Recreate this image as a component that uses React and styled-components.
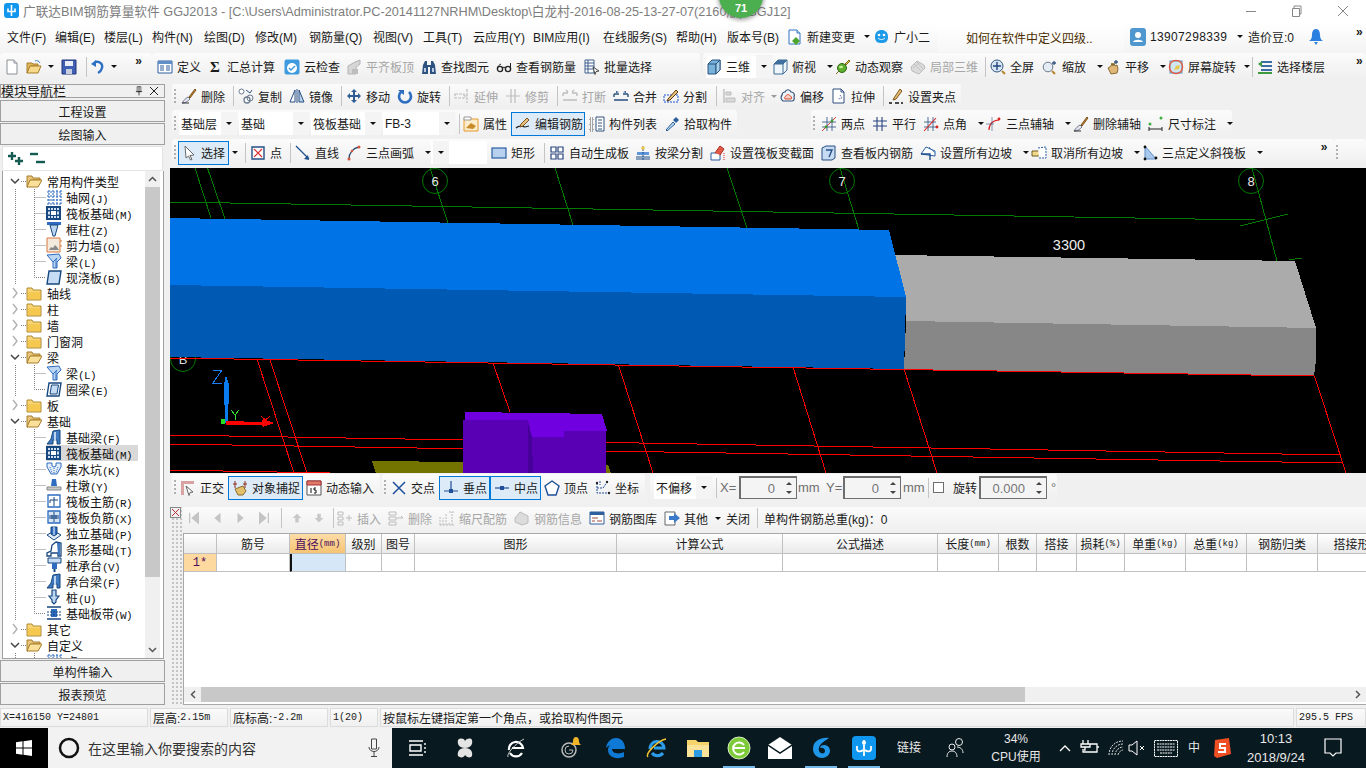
import React from "react";
import styled, { createGlobalStyle } from "styled-components";

const GlobalStyle = createGlobalStyle`
  html, body { margin: 0; padding: 0; background: #f0f0f0; }
  body { font-family: "Liberation Sans", "Noto Sans CJK SC", sans-serif; font-size: 12px; color: #1a1a1a; }
`;

/* ---------- icons ---------- */
const I = {
  newdoc: <><path d="M3 1h7l3 3v11H3z" fill="#fff" stroke="#8a8f96" /><path d="M10 1v3h3" fill="#dfe6ee" stroke="#8a8f96" /></>,
  change: <><path d="M2 1h8l3 3v11H2z" fill="#fff" stroke="#2f72c4" /><path d="M10 1v3h3" fill="#dfe6ee" stroke="#2f72c4" /><path d="M9 8l4 4-4 4-4-4z" fill="#4da52e" /></>,
  open: <><path d="M1 4h5l1 1h5v2H5L1 14z" fill="#e0b65a" stroke="#a77d2a" /><path d="M4 7h11l-3 7H1z" fill="#f6d98a" stroke="#a77d2a" /><path d="M9 2c2-1 4 0 5 2" fill="none" stroke="#3c7fc4" /></>,
  save: <><path d="M1 1h14v14H1z" fill="#3f5fb5" stroke="#23387a" /><path d="M4 2h8v5H4z" fill="#e8edf7" /><path d="M5 10h6v5H5z" fill="#c7cede" /></>,
  undo: <><path d="M5 3c5-1 8 2 7 6-.5 2-2 4-4 5" fill="none" stroke="#2f72c4" strokeWidth="2.4" /><path d="M1 5l5-4v7z" fill="#2f72c4" /></>,
  define: <><path d="M1 2h14v12H1z" fill="#fff" stroke="#2f5e9e" /><path d="M1 2h14v3H1z" fill="#5f8fc9" /><path d="M3 7h4M3 9h4M3 11h4M9 7h4M9 9h4M9 11h4" stroke="#2f5e9e" /></>,
  cloud: <><rect x="0.5" y="0.5" width="15" height="15" rx="2" fill="#3e9be0" /><circle cx="8" cy="9" r="5" fill="#fff" /><path d="M5 9l2 2 4-4" fill="none" stroke="#3e9be0" strokeWidth="1.5" /></>,
  level: <><path d="M2 15V7l7-4 5-2v4l-4 3v7z" fill="#d6d6d6" stroke="#b4b4b4" /><path d="M6 10h6v5H6z" fill="#bdbdbd" /></>,
  binoc: <><path d="M2 6l2-4h2v4h4V2h2l2 4 1 9H9V8H7v7H1z" fill="#2f5380" /><path d="M3 9h2v4H3zM11 9h2v4h-2z" fill="#b9cbe2" /></>,
  glasses: <><circle cx="4" cy="10" r="2.6" fill="none" stroke="#222" strokeWidth="1.4" /><circle cx="12" cy="10" r="2.6" fill="none" stroke="#222" strokeWidth="1.4" /><path d="M6 9c1-1 3-1 4 0M1.5 9C2 7 3 6 5 5M14.5 9V4" fill="none" stroke="#222" /></>,
  batch: <><path d="M1 1h9v13H1z" fill="#fff" stroke="#3d5f8c" /><path d="M1 4h9M1 7h9M1 10h9M4 1v13" stroke="#3d5f8c" /><path d="M9 8l6 4-3 .5-1 3z" fill="#fff" stroke="#444" /></>,
  cube: <><path d="M2 5l4-4h8v10l-4 4H2z" fill="#79b3dc" stroke="#28527f" /><path d="M2 5h8v10" fill="none" stroke="#28527f" /><path d="M10 5l4-4v10l-4 4z" fill="#a8d0ea" stroke="#28527f" /></>,
  top: <><path d="M6 1h9v10l-4 4H2V5z" fill="#eef5fb" stroke="#3d6a96" /><path d="M2 5h9v10M11 5l4-4" fill="none" stroke="#3d6a96" /><path d="M6 1h9L11 5H2z" fill="#3f6f9f" /></>,
  orbit: <><circle cx="7" cy="9" r="4.5" fill="#5cae2e" stroke="#2f6b14" /><path d="M1 15l3-3M10 5l4-4 1 1-4 4z" fill="#e8c23a" stroke="#7c6a18" /><ellipse cx="6" cy="8" rx="2" ry="1.3" fill="#c5ec98" /></>,
  local3d: <><path d="M1 8l6-6 7 4 1 3-6 6-7-3z" fill="#dcdcdc" stroke="#bcbcbc" /><path d="M4 5l7 7M7 3l6 7M3 9l6-5" stroke="#c4c4c4" /></>,
  full: <><circle cx="7" cy="7" r="6" fill="#d7e5f5" stroke="#35557f" /><path d="M7 3v8M3 7h8" stroke="#23457c" strokeWidth="1.4" /><path d="M12 12l3 3" stroke="#b5852c" strokeWidth="2" /></>,
  zoom: <><circle cx="6" cy="8" r="4.8" fill="#e4edf6" stroke="#6c7a8b" /><path d="M10 12l3 3" stroke="#b5852c" strokeWidth="2" /><path d="M12 2v4M10 4h4" stroke="#35557f" strokeWidth="1.3" /></>,
  pan: <><path d="M3 9l3-2 1-3 1 3 1-3 1 3 2-1 1 4-1 4-6 1z" fill="#dfb878" stroke="#8b6a32" /><path d="M11 1v4M9 3h4" stroke="#35557f" strokeWidth="1.3" /></>,
  screen: <><rect x="2" y="2" width="12" height="12" fill="#cfe6f0" stroke="#5b8fb0" /><circle cx="8" cy="8" r="6.6" fill="none" stroke="#e5553e" strokeWidth="1.3" /><path d="M6 11l2-4 4-1-1 4z" fill="#e8c84a" /></>,
  floors: <><path d="M4 2h11v2H4zM4 6h11v2H4zM4 10h11v2H4z" fill="#3b6ea5" /><path d="M1 13h14v2H1z" fill="#3d9a3d" /><path d="M1 5l4-3v6z" fill="#3d9a3d" /></>,
  broom: <><path d="M1 15c2-3 4-5 6-6l2 2c-2 2-4 4-8 4z" fill="#e8e8ef" stroke="#6e7690" /><path d="M8 9l6-8 1 1-6 8z" fill="#c98a3a" stroke="#7c5218" /><path d="M1 15h7" stroke="#333" /></>,
  copy: <><circle cx="3.5" cy="3.5" r="2.5" fill="#fff" stroke="#6a7b8f" /><circle cx="9" cy="12" r="3" fill="#fff" stroke="#6a7b8f" strokeWidth="1.3" /><circle cx="12" cy="10" r="3" fill="none" stroke="#6a7b8f" /><path d="M8 2l4 3 2-3" fill="none" stroke="#35557f" /></>,
  mirror: <><path d="M1 14L6 2v12z" fill="#fff" stroke="#274f86" /><path d="M15 14L10 2v12z" fill="#bcd2ea" stroke="#274f86" /><path d="M8 1v14" stroke="#274f86" /></>,
  move: <path d="M8 1l3 3H9v3h3V5l3 3-3 3V9H9v3h2l-3 3-3-3h2V9H4v2L1 8l3-3v2h3V4H5z" fill="#2f5e95" />,
  rotate: <><path d="M4 4a6 6 0 1 0 8 0" fill="none" stroke="#2d6dc0" strokeWidth="2.6" /><path d="M1 2h6v5z" fill="#2d6dc0" /></>,
  extend: <path d="M1 6h9v4H1zM13 1v14M10 8h3" fill="none" stroke="#bdbdbd" strokeWidth="1.2" strokeDasharray="3 1" />,
  trim: <path d="M6 1v14M10 1v14M1 8h14" fill="none" stroke="#bdbdbd" strokeWidth="1.2" />,
  cut: <path d="M1 5h5M10 5h5M1 12h14M1 5v3M15 5v3M4 2l2 2M12 2l-2 2" fill="none" stroke="#bdbdbd" strokeWidth="1.4" />,
  merge: <><path d="M1 12h14M1 6h5M10 6h5M1 6v3M15 6v3" fill="none" stroke="#28507f" strokeWidth="1.4" /><path d="M3 3l3 1-3 1zM13 3l-3 1 3 1z" fill="#28507f" /></>,
  split: <><path d="M1 7h14v7H1z" fill="none" stroke="#1f55d0" strokeDasharray="2 1" /><path d="M5 11l8-9 2 2-8 8-3 1z" fill="#e8c27a" stroke="#5a3a12" /></>,
  alignT: <><path d="M3 1v14" stroke="#bdbdbd" strokeWidth="1.4" /><path d="M5 4h5v3H5zM5 10h9v4H5z" fill="#d8d8d8" stroke="#bdbdbd" /></>,
  offset: <><path d="M3 13a4 4 0 0 1-1-6c0-2 2-3 3-3 1-3 5-3 6 0 3 0 4 3 3 5 1 3-1 4-2 4z" fill="#eef3f9" stroke="#33527c" strokeWidth="1.2" /><path d="M5 11c-1-2 1-3 1-3 1-2 3-2 4 0 2 0 2 3 1 3z" fill="#f8cfc4" stroke="#d8492e" /></>,
  stretch: <><path d="M2 1h8l3 3v11H2z" fill="#fff" stroke="#2f4f7e" /><path d="M10 1v3h3" fill="none" stroke="#2f4f7e" /><path d="M9 7l2 3-4 1" fill="none" stroke="#2f4f7e" strokeDasharray="1 1" /></>,
  grip: <><path d="M6 10l6-9 2 2-6 8-3 1z" fill="#e4c078" stroke="#7c5218" /><path d="M1 15h3M7 15h4M13 15h2" stroke="#111" strokeWidth="1.6" /></>,
  attr: <><path d="M1 3h14v12H1z" fill="#fdecc9" stroke="#e59a2e" /><path d="M1 1h7v3H1z" fill="#fff" stroke="#999" /><path d="M3 12l5-5 5 3-3 3z" fill="#c98a2a" /></>,
  edit: <><path d="M1 12c3-3 6-2 9-1l4-1" fill="none" stroke="#222" strokeWidth="1.2" /><path d="M6 8l6-6 2 2-6 6-3 1z" fill="#e7c27e" stroke="#7c5218" /></>,
  list: <><path d="M1 2h3v3H1zM1 7h3v3H1zM1 12h3v3H1z" fill="none" stroke="#555" strokeDasharray="1 1" /><path d="M7 1h8v14H7z" fill="#fff" stroke="#33527c" /><path d="M9 4h4M9 7h4M9 10h4M9 13h4" stroke="#33527c" /></>,
  pick: <><path d="M2 14l7-8 2 2-8 7z" fill="#bcd6ef" stroke="#2c5f9a" /><path d="M9 4l3-3 3 3-3 3z" fill="#2c5f9a" /></>,
  two: <><path d="M1 15L15 1" stroke="#d23b2e" /><path d="M1 6h14M1 11h14M6 1v14M11 1v14" stroke="#3d5f8c" strokeWidth="0.9" /><circle cx="5" cy="11" r="1.4" fill="#3f9a2e" /><circle cx="11" cy="5" r="1.4" fill="#3f9a2e" /></>,
  para: <path d="M1 5h14M1 10h14M5 1v14M10 1v14" stroke="#29447f" strokeWidth="1.1" />,
  ang: <><path d="M1 6h12M1 11h12M5 1v14M10 1v14" stroke="#3d5f8c" strokeWidth="0.9" /><path d="M1 15L13 2" stroke="#d22" strokeWidth="1.1" /><circle cx="14" cy="11" r="1.4" fill="#d22" /></>,
  arcr: <><path d="M3 14c0-6 4-10 10-10" fill="none" stroke="#d22" strokeWidth="1.2" /><path d="M0 8h8M6 1v14" stroke="#3d5f8c" strokeWidth="0.6" /><circle cx="13" cy="3" r="1.4" fill="#d22" /></>,
  dim: <><path d="M1 11v4M14 11v4M1 13h13" stroke="#222" /><circle cx="2" cy="8" r="1.5" fill="#3fae3f" /><circle cx="13" cy="2" r="1.5" fill="#3fae3f" /></>,
  cursor: <path d="M3 1l9 9-4 .5 2 4-1.5.5-2-4L4 13z" fill="#fff" stroke="#6a6a6a" />,
  point: <><path d="M2 2h12v12H2z" fill="#fff" stroke="#244f85" strokeWidth="1.4" /><path d="M4 4l8 8M12 4l-8 8" stroke="#d33" strokeWidth="1.2" /></>,
  line: <><path d="M1 1l13 13" stroke="#1f4f8a" strokeWidth="1.2" /><path d="M14 15l-5-1 4-4z" fill="#1f4f8a" /></>,
  arc: <><path d="M3 14C3 8 7 3 13 2" fill="none" stroke="#27486f" strokeWidth="1.3" /><circle cx="3" cy="14" r="1.5" fill="#d7543a" /><circle cx="13" cy="2" r="1.5" fill="#d7543a" /><circle cx="6" cy="6" r="1.2" fill="#d7543a" /></>,
  rect: <rect x="1" y="3" width="14" height="10" fill="#b6d0ee" stroke="#2a5ea3" strokeWidth="1.2" />,
  auto: <path d="M2 2h5v5H2zM9 2h5v5H9zM2 9h5v5H2zM9 9h5v5H9z" fill="#fff" stroke="#29447f" strokeWidth="1.2" />,
  beamsplit: <><path d="M2 7h12v3H2z" fill="#5e96d9" /><path d="M1 12h14M1 14h14" stroke="#1f4f8a" /><path d="M8 1v14" stroke="#1f4f8a" strokeDasharray="2 1" /><circle cx="8" cy="3" r="1.8" fill="#e8c84a" /></>,
  varsec: <><path d="M1 8h9v7H1z" fill="#fff" stroke="#2a5ea3" /><path d="M5 8l5-7 4 3-4 6" fill="#e05a4a" stroke="#b02a1a" /><path d="M14 8v7" stroke="#d22" strokeDasharray="1 1" /></>,
  viewbar: <><path d="M1 3l4-2h9v12l-3 2H1z" fill="#c7dcf2" stroke="#274f86" /><path d="M5 5h6l-3 7" fill="none" stroke="#274f86" strokeWidth="1.4" /></>,
  slope: <><path d="M1 9l5-7 9 4v5z" fill="#fff" stroke="#2a5ea3" /><path d="M1 9h9v6" fill="none" stroke="#1f4f8a" strokeWidth="1.4" /><path d="M9 2l6 6" stroke="#2a5ea3" strokeDasharray="1 1" /></>,
  unslope: <><path d="M1 6h9v5H1z" fill="#f4d98a" stroke="#6a5a20" /><path d="M7 3l8-1v11H8" fill="#fff" stroke="#2a5ea3" strokeDasharray="2 1" /></>,
  tri: <><path d="M3 1v13h11z" fill="#a8c8ec" stroke="#5f8fc9" /><circle cx="3" cy="2" r="1.4" fill="#111" /><circle cx="3" cy="14" r="1.4" fill="#111" /><circle cx="14" cy="13" r="1.4" fill="#111" /></>,
  ortho: <><path d="M1 1h13v3H4v11H1z" fill="#d9a3a3" /><path d="M6 6l7 6-3 .5-1 3z" fill="#fff" stroke="#666" /></>,
  snap: <><path d="M3 1v7M13 1v7M1 4h4M11 4h4" stroke="#8a2a1a" /><path d="M3 9l8-3 3 5-3 4H6z" fill="#e3bf6a" stroke="#8b6a32" /></>,
  dyn: <><path d="M1 1h14v14H1z" fill="#fff" stroke="#555" /><path d="M1 1h14v4H1z" fill="#e07a6a" stroke="#a33" /><path d="M5 8v5M10 8h-2v2h2v3H8" stroke="#111" fill="none" /></>,
  cross: <path d="M2 2l12 12M14 2L2 14" stroke="#1e4f98" strokeWidth="1.5" />,
  perp: <><path d="M8 1v10M1 11h14" stroke="#1e4f98" strokeWidth="1.2" /><rect x="6" y="9" width="4" height="4" fill="#1e4f98" /></>,
  mid: <><path d="M1 8h14" stroke="#1e4f98" strokeWidth="1.2" /><rect x="6" y="6" width="4" height="4" fill="#1e4f98" /></>,
  vertex: <path d="M8 1l7 5-3 9H4L1 6z" fill="#fff" stroke="#1e4f98" strokeWidth="1.4" />,
  coord: <><path d="M2 3v10h12M5 1v4M2 8h6l4-6" fill="none" stroke="#1e4f98" strokeDasharray="2 1" /><circle cx="2" cy="3" r="1.2" fill="#222" /><circle cx="14" cy="13" r="1.2" fill="#222" /><circle cx="12" cy="2" r="1.2" fill="#222" /></>,
  first: <path d="M3 2v12M13 2v12L6 8z" fill="#c4c4c4" stroke="#c4c4c4" strokeWidth="1.4" />,
  prev: <path d="M12 2v12L5 8z" fill="#c4c4c4" />,
  next: <path d="M4 2v12l7-6z" fill="#c4c4c4" />,
  last: <path d="M13 2v12M3 2v12l7-6z" fill="#c4c4c4" stroke="#c4c4c4" strokeWidth="1.4" />,
  up: <path d="M8 3l5 5h-3v5H6V8H3z" fill="#c8c8c8" />,
  down: <path d="M8 13l5-5h-3V3H6v5H3z" fill="#c8c8c8" />,
  ins: <path d="M1 2h5v3H1zM1 7h5v3H1zM1 12h5v3H1zM9 8h6M12 5v6" fill="none" stroke="#bcbcbc" />,
  del: <path d="M1 2h7v3H1zM1 7h7v3H1zM1 12h7v3H1zM9 8h6l-2-2" fill="none" stroke="#bcbcbc" />,
  scale: <path d="M1 15V6M4 15V8M7 15V4M10 15v-3M13 15V2M1 15h14M10 2h5" fill="none" stroke="#bcbcbc" strokeDasharray="2 1" />,
  info: <path d="M1 8l5-6 8 4v7l-6 2-7-3z" fill="#dcdcdc" stroke="#bcbcbc" />,
  lib: <><path d="M1 2h14v12H1z" fill="#fff" stroke="#2f5e9e" /><path d="M1 2h14v3H1z" fill="#2f5e9e" /><path d="M3 8h6M3 11h3M8 11h5" stroke="#a04a3a" /></>,
  other: <><path d="M1 2h10v13H1z" fill="#fff" stroke="#666" /><path d="M5 6h5V3l6 5-6 5v-3H5z" fill="#3a78c9" /></>,
  plusplus: <><path d="M4 1v8M0 5h8" stroke="#145c52" strokeWidth="2.4" /><path d="M11 6v8M7 10h8" stroke="#145c52" strokeWidth="2.4" /></>,
  minusminus: <><path d="M0 3h8" stroke="#145c52" strokeWidth="2.4" /><path d="M6 11h9" stroke="#145c52" strokeWidth="2.4" /></>,
  pin: <><path d="M5 1h6v8H5z" fill="none" stroke="#222" /><path d="M8 1v8M3 9h10M8 9v6" stroke="#222" strokeWidth="1.3" /></>,

  fclosed: <><path d="M1 3h5l1 2h8v10H1z" fill="#f8d677" stroke="#b08a30" /><path d="M2 7h12v7H2z" fill="#f5c84f" /></>,
  fopen: <><path d="M1 3h5l1 2h7v2H5l-3 7H1z" fill="#e9c67d" stroke="#a77d2a" /><path d="M4 7h12l-4 7H1z" fill="#fbe099" stroke="#a77d2a" /></>,
  grid: <path d="M1 3h14M1 7h14M1 11h14M1 15h14M3 1v14M7 1v14M11 1v14M15 1v14" stroke="#2d6cc0" strokeDasharray="2 1" strokeWidth="1.1" />,
  raft: <><path d="M0 1h15v14H0z" fill="#17477f" /><path d="M2 3h2v2H2zM5 3h2v2H5zM8 3h2v2H8zM11 3h2v2h-2zM2 11h2v2H2zM5 11h2v2H5zM8 11h2v2H8zM11 11h2v2h-2zM2 6.500h2v3H2zM11 6.500h2v3h-2z" fill="#cfe0f4" /><path d="M5 6h5v4H5z" fill="#fff" /></>,
  col: <><path d="M1 1h14v3H1z" fill="#2d6cc0" /><path d="M4 4h8L9 15H7z" fill="#bcd6f2" stroke="#17477f" /></>,
  wall: <><path d="M1 1h13v14H1z" fill="#f4e9dd" stroke="#d9793e" /><path d="M3 13l2-3 2 1 2-3 2 2 2 3z" fill="#888" /><path d="M15 3v2M15 8v2" stroke="#d9793e" /></>,
  beam: <><path d="M1 2l12-1 2 4-4 4v6H7V9z" fill="#bcd6f2" stroke="#2d6cc0" /><path d="M7 9l4-4M10 15V6" stroke="#2d6cc0" /></>,
  slab: <path d="M3 2h12l-2 13H1z" fill="#c6dbf4" stroke="#17477f" strokeWidth="1.4" />,
  ring: <><path d="M3 2h12l-2 13H1z" fill="#fff" stroke="#17477f" strokeWidth="1.4" /><path d="M5.500 4h7L11 13H4z" fill="#c6dbf4" stroke="#17477f" /></>,
  fbeam: <><path d="M1 15l4-5 2-8 7-1v14h-3v-4H7v4z" fill="#3f79bf" stroke="#17477f" /><path d="M9 3v9" stroke="#bcd6f2" strokeWidth="2" /></>,
  sump: <><path d="M1 2h5v3l2 1 2-1V2h5v4l-4 7H5L1 6z" fill="#e4eef8" stroke="#2d6cc0" /><path d="M4 6l2 6M8 7v6M12 6l-2 6" stroke="#2d6cc0" strokeDasharray="1 1" /></>,
  pier: <><path d="M6 2h4l1 7H5z" fill="#2d6cc0" /><path d="M1 10h14v3H1z" fill="#c9c9c9" stroke="#8a8a8a" /></>,
  main: <><path d="M2 2h12v12H2z" fill="#fff" stroke="#2d6cc0" strokeWidth="1.3" /><path d="M8 4v9M4 7h8M4 7v3" stroke="#17477f" fill="none" /></>,
  neg: <><path d="M2 2h12v12H2z" fill="#d7e5f5" stroke="#2d6cc0" strokeWidth="1.3" /><path d="M8 3v10M3 7h10M3 9h10M6 6v4M10 6v4" stroke="#17477f" /></>,
  iso: <><path d="M1 10l7-4 7 4-7 5z" fill="#e4eef8" stroke="#17477f" /><path d="M5 2h6v7l-3 2-3-2z" fill="#2d6cc0" stroke="#17477f" /><path d="M8 2v8" stroke="#fff" /></>,
  strip: <><path d="M1 15v-3l4-2 1-6 4-3 5 1v13h-3v-3H5v3z" fill="#fff" stroke="#17477f" strokeWidth="1.3" /><path d="M11 2l3 0v12h-2z" fill="#3f79bf" /></>,
  cap: <><path d="M2 1h13v5H2z" fill="#c6dbf4" stroke="#17477f" /><path d="M6 6h5v6H6z" fill="#2d6cc0" /><path d="M8.500 12v3" stroke="#17477f" strokeWidth="2" /></>,
  pile: <path d="M6 1h4v6h3l-3 4v2l-2 2-2-2v-2L3 7h3z" fill="#bcd6f2" stroke="#17477f" strokeWidth="1.2" />,
  band: <><path d="M1 2h14M1 14h14" stroke="#17477f" strokeWidth="1.4" /><path d="M5 4h6v8H5z" fill="#2d6cc0" /><path d="M1 7h14M1 10h14" stroke="#17477f" strokeDasharray="2 1" /></>,
};

const Icon = ({ n, s = 16 }) => (
  <svg width={s} height={s} viewBox="0 0 16 16" style={{ flex: "none", display: "block" }}>
    {I[n]}
  </svg>
);

/* ---------- top bars ---------- */
const Page = styled.div`
  position: relative;
  width: 1366px;
  height: 768px;
  overflow: hidden;
  background: #f0f0f0;
  display: flex;
  flex-direction: column;
`;

const TitleBar = styled.div`
  height: 23px;
  box-sizing: border-box;
  padding: 0 0 2px 4px;
  background: #fff;
  display: flex;
  align-items: center;
  flex: none;
`;

const AppLogo = styled.div`
  width: 15px;
  height: 15px;
  border-radius: 3px;
  background: #1296ee;
  margin-right: 4px;
  flex: none;
`;

const TitleText = styled.div`
  color: #7d7d7d;
  font-size: 12.7px;
  white-space: nowrap;
  width: 1190px;
  overflow: hidden;
`;

const WindowBtn = styled.div`
  width: 46px;
  display: flex;
  justify-content: center;
  flex: none;
`;

const Badge = styled.div`
  position: absolute;
  left: 719px;
  top: -26px;
  width: 44px;
  height: 44px;
  border-radius: 50%;
  background: #4bae4f;
  box-shadow: 0 1px 4px 1px rgba(80, 80, 80, 0.55);
  color: #fff;
  font-size: 11px;
  font-weight: bold;
  display: flex;
  align-items: flex-end;
  justify-content: center;
  padding-bottom: 4px;
  box-sizing: border-box;
`;

const MenuBar = styled.div`
  height: 30px;
  box-sizing: border-box;
  flex: none;
  display: flex;
  align-items: center;
  padding: 0 0 3px 7px;
  background: linear-gradient(#ffffff, #f3f3f3);
  position: relative;
`;

const MenuItem = styled.div`
  flex: none;
  width: ${(p) => p.$w}px;
  white-space: nowrap;
  display: flex;
  align-items: center;
  gap: ${(p) => p.$gap || 0}px;
`;

const Phone = styled.span`
  letter-spacing: 0.35px;
`;

const AskBox = styled.div`
  flex: none;
  width: 187px;
  height: 28px;
  box-sizing: border-box;
  margin: 3px 6px 0 0;
  padding: 0 0 2px 29px;
  display: flex;
  align-items: center;
  color: #4a2d00;
  background: linear-gradient(#fff, #f7f7f7);
  border-radius: 3px;
`;

const Overflow = styled.span`
  font-family: "Liberation Sans", sans-serif;
  font-weight: bold;
  font-size: 12px;
  line-height: 10px;
  align-self: flex-start;
  margin-top: ${(p) => p.$top || 3}px;
  flex: none;
`;

const Caret = styled.span`
  display: block;
  flex: none;
  width: 0;
  height: 0;
  margin-left: ${(p) => p.$ml ?? 7}px;
  border-left: 3px solid transparent;
  border-right: 3px solid transparent;
  border-top: 3px solid ${(p) => (p.$off ? "#999" : "#111")};
`;

const ToolRow = styled.div`
  flex: none;
  height: ${(p) => p.$h || 27}px;
  margin-top: ${(p) => p.$mt || 0}px;
  display: flex;
  align-items: stretch;
`;

const Group = styled.div`
  flex: none;
  box-sizing: border-box;
  width: ${(p) => p.$w}px;
  margin-left: ${(p) => p.$ml || 0}px;
  padding-left: ${(p) => p.$pl || 0}px;
  display: flex;
  align-items: center;
  background: linear-gradient(#fbfbfb, #efefef);
  border-radius: 3px;
`;

const Grip = styled.span`
  flex: none;
  width: 2px;
  height: 15px;
  margin: 0 ${(p) => p.$mr ?? 3}px 0 2px;
  background: repeating-linear-gradient(#b0b0b0 0 2px, transparent 2px 4px);
`;

const Sep = styled.span`
  flex: none;
  width: ${(p) => p.$w}px;
  height: 20px;
  display: flex;
  justify-content: center;
  &::before {
    content: "";
    width: 1px;
    background: #c4c4c4;
  }
`;

const ToolBox = styled.div`
  flex: none;
  box-sizing: border-box;
  width: ${(p) => p.$w}px;
  height: ${(p) => (p.$on ? "24px" : "auto")};
  margin-left: ${(p) => p.$ml || 0}px;
  display: flex;
  align-items: center;
  gap: ${(p) => p.$gap ?? 4}px;
  white-space: nowrap;
  color: ${(p) => (p.$off ? "#a6a6a6" : "#1a1a1a")};
  ${(p) => p.$on && "background:#dcebf7;border:1px solid #0078d7;padding-left:3px;"}
  ${(p) => p.$lit && "background:#fff;height:22px;"}
`;

const SigmaMark = styled.span`
  flex: none;
  width: 16px;
  text-align: center;
  font-family: "Liberation Serif", serif;
  font-weight: bold;
  font-size: 15px;
  line-height: 16px;
`;

const Combo = styled.div`
  flex: none;
  box-sizing: border-box;
  width: ${(p) => p.$w}px;
  height: 23px;
  margin-right: ${(p) => p.$mr ?? 2}px;
  padding-left: 2px;
  display: flex;
  align-items: center;
  justify-content: space-between;
  background: #fff;
  white-space: nowrap;
`;

const ComboArrow = styled.span`
  flex: none;
  width: 16px;
  height: 23px;
  background: #f4f4f4;
  display: flex;
  align-items: center;
  justify-content: center;
`;

const renderItems = (items) =>
  items.map((t, i) => {
    if (t.sep) return <Sep key={i} $w={t.sep} />;
    if (t.combo !== undefined)
      return (
        <Combo key={i} $w={t.w} $mr={t.mr}>
          {t.combo}
          <ComboArrow>
            <Caret $ml={0} />
          </ComboArrow>
        </Combo>
      );
    return (
      <ToolBox key={i} $w={t.w} $ml={t.ml} $off={t.off} $on={t.on} $lit={t.lit}>
        {t.sigma ? <SigmaMark>Σ</SigmaMark> : <Icon n={t.i} />}
        {t.l}
        {t.c && <Caret $ml={t.cm} $off={t.off} />}
      </ToolBox>
    );
  });

const row1a = [
  { i: "define", l: "定义", w: 50 },
  { sigma: 1, l: "汇总计算", w: 77 },
  { i: "cloud", l: "云检查", w: 62 },
  { i: "level", l: "平齐板顶", w: 75, off: 1 },
  { i: "binoc", l: "查找图元", w: 75 },
  { i: "glasses", l: "查看钢筋量", w: 88 },
  { i: "batch", l: "批量选择", w: 84 },
];
const row1b = [
  { i: "top", l: "俯视", w: 63, c: 1 },
  { i: "orbit", l: "动态观察", w: 75 },
  { i: "local3d", l: "局部三维", w: 71, off: 1 },
  { sep: 9 },
  { i: "full", l: "全屏", w: 52 },
  { i: "zoom", l: "缩放", w: 63, c: 1 },
  { i: "pan", l: "平移", w: 63, c: 1 },
  { i: "screen", l: "屏幕旋转", w: 80, c: 1, cm: 4 },
  { sep: 9 },
  { i: "floors", l: "选择楼层", w: 68 },
];
const row2 = [
  { i: "broom", l: "删除", w: 48 }, { sep: 9 },
  { i: "copy", l: "复制", w: 51 },
  { i: "mirror", l: "镜像", w: 48 }, { sep: 9 },
  { i: "move", l: "移动", w: 51 },
  { i: "rotate", l: "旋转", w: 48 }, { sep: 9 },
  { i: "extend", l: "延伸", w: 51, off: 1 },
  { i: "trim", l: "修剪", w: 48, off: 1 }, { sep: 9 },
  { i: "cut", l: "打断", w: 51, off: 1 },
  { i: "merge", l: "合并", w: 50 },
  { i: "split", l: "分割", w: 48 }, { sep: 10 },
  { i: "alignT", l: "对齐", w: 59, off: 1, c: 1, cm: 2 },
  { i: "offset", l: "偏移", w: 51 },
  { i: "stretch", l: "拉伸", w: 48 }, { sep: 9 },
  { i: "grip", l: "设置夹点", w: 68 },
];
const row3a = [
  { combo: "基础层", w: 58 },
  { combo: "基础", w: 70 },
  { combo: "筏板基础", w: 70 },
  { combo: "FB-3", w: 72, mr: 0 },
  { sep: 8 },
  { i: "attr", l: "属性", w: 48 },
  { i: "edit", l: "编辑钢筋", w: 74, on: 1 },
  { i: "list", l: "构件列表", w: 75, ml: 4 },
  { i: "pick", l: "拾取构件", w: 68 },
];
const row3b = [
  { i: "two", l: "两点", w: 51 },
  { i: "para", l: "平行", w: 51 },
  { i: "ang", l: "点角", w: 63, c: 1 },
  { i: "arcr", l: "三点辅轴", w: 87, c: 1 },
  { i: "broom", l: "删除辅轴", w: 75 },
  { i: "dim", l: "尺寸标注", w: 80, c: 1 },
];
const row4 = [
  { i: "point", l: "点", w: 36 }, { sep: 9 },
  { i: "line", l: "直线", w: 51 },
  { i: "arc", l: "三点画弧", w: 85, c: 1 },
  { combo: "", w: 56, mr: 4 },
  { i: "rect", l: "矩形", w: 48 }, { sep: 10 },
  { i: "auto", l: "自动生成板", w: 86 },
  { i: "beamsplit", l: "按梁分割", w: 75 },
  { i: "varsec", l: "设置筏板变截面", w: 111 },
  { i: "viewbar", l: "查看板内钢筋", w: 99 },
  { i: "slope", l: "设置所有边坡", w: 111, c: 1 },
  { i: "unslope", l: "取消所有边坡", w: 111, c: 1 },
  { i: "tri", l: "三点定义斜筏板", w: 123, c: 1 },
];
const snapA = [
  { i: "ortho", l: "正交", w: 48 },
  { i: "snap", l: "对象捕捉", w: 75, on: 1 },
  { i: "dyn", l: "动态输入", w: 70, ml: 3 },
];
const snapB = [
  { i: "cross", l: "交点", w: 48 },
  { i: "perp", l: "垂点", w: 51, on: 1 },
  { i: "mid", l: "中点", w: 51, on: 1 },
  { i: "vertex", l: "顶点", w: 51, ml: 3 },
  { i: "coord", l: "坐标", w: 45 },
];

/* ---------- navigation panel ---------- */
const Main = styled.div`
  flex: 1;
  min-height: 0;
  display: flex;
  padding-top: 4px;
`;

const Nav = styled.div`
  flex: none;
  width: 165px;
  margin-right: 5px;
  display: flex;
  flex-direction: column;
  height: 621px;
`;

const NavHead = styled.div`
  height: 14px;
  box-sizing: border-box;
  flex: none;
  display: flex;
  align-items: center;
  border: 1px solid #a0a0a0;
  font-family: "Noto Sans CJK SC", sans-serif;
  font-size: 13px;
  line-height: 12px;
`;

const NavBtn = styled.div`
  flex: none;
  height: 22px;
  margin-top: ${(p) => p.$mt ?? 1}px;
  box-sizing: border-box;
  border: 1px solid #a0a0a0;
  background: #f0f0f0;
  display: flex;
  align-items: center;
  justify-content: center;
`;

const NavTools = styled.div`
  flex: none;
  height: 25px;
  margin: 1px 2px 0 2px;
  box-sizing: border-box;
  background: #fff;
  display: flex;
  align-items: center;
  gap: 6px;
  padding: 1px 0 0 5px;
  border: 1px solid #e4e4e4;
`;

const TreeFrame = styled.div`
  flex: 1;
  min-height: 0;
  margin: 0 1px 0 2px;
  display: flex;
  background: #fff;
  border: 1px solid #a0a0a0;
  border-top: none;
  overflow: hidden;
`;

const TreeList = styled.div`
  flex: 1;
  min-width: 0;
  padding-top: 2px;
  overflow: hidden;
`;

const TreeRow = styled.div`
  height: 16px;
  display: flex;
  align-items: center;
  white-space: nowrap;
  font-family: "Noto Sans CJK SC", sans-serif;
  font-size: 12px;
  color: #111;
`;

const Key = styled.span`
  font-family: "Liberation Mono", monospace;
  font-size: 11px;
  letter-spacing: -0.6px;
`;

const TreeLabel = styled.span`
  margin-left: ${(p) => p.$ml}px;
  display: flex;
  align-items: center;
  height: 16px;
`;

const SelectedCell = styled.span`
  display: flex;
  align-items: center;
  height: 16px;
  gap: 4px;
  ${(p) => p.$sel && "background:#d9d9d9;padding-right:6px;"}
`;

const VScroll = styled.div`
  flex: none;
  width: 15px;
  margin-right: 3px;
  background: #f0f0f0;
  display: flex;
  flex-direction: column;
`;

const ScrollEnd = styled.div`
  flex: none;
  height: ${(p) => p.$h}px;
  display: flex;
  align-items: center;
  justify-content: center;
`;

const ScrollThumb = styled.div`
  flex: none;
  height: ${(p) => p.$h}px;
  background: #c8c8c8;
`;

const Spacer = styled.div`
  flex: 1;
`;

const Chev = ({ open }) => (
  <svg width="12" height="16" viewBox="0 0 12 16" style={{ flex: "none", marginLeft: 6, display: "block" }}>
    {open ? (
      <path d="M2 6l4 4 4-4" fill="none" stroke="#444" strokeWidth="1.5" />
    ) : (
      <path d="M4 3l4 5-4 5" fill="none" stroke="#b4b4b4" strokeWidth="1.5" />
    )}
  </svg>
);

const Guide = ({ last, trunk }) => (
  <svg width="43" height="16" viewBox="0 0 43 16" style={{ flex: "none", display: "block" }}>
    {trunk && <path d="M12.500 0v16" stroke="#808080" strokeDasharray="1 1" />}
    <path d={last ? "M31.500 0v8.500H43" : "M31.500 0v16M31.500 8.500H43"} fill="none" stroke="#808080" strokeDasharray="1 1" />
  </svg>
);

const Stub = () => (
  <svg width="5" height="16" viewBox="0 0 5 16" style={{ flex: "none", display: "block" }}>
    <path d="M0 8.500h5" stroke="#808080" strokeDasharray="1 1" />
  </svg>
);

const Label = ({ text }) => {
  const m = text.match(/^(.*?)(\(.*\))?$/);
  return (
    <>
      {m[1]}
      {m[2] && <Key>{m[2]}</Key>}
    </>
  );
};

const tree = [
  { f: "常用构件类型", open: 1 },
  { c: "轴网(J)", i: "grid" }, { c: "筏板基础(M)", i: "raft" }, { c: "框柱(Z)", i: "col" },
  { c: "剪力墙(Q)", i: "wall" }, { c: "梁(L)", i: "beam" }, { c: "现浇板(B)", i: "slab", last: 1 },
  { f: "轴线" }, { f: "柱" }, { f: "墙" }, { f: "门窗洞" },
  { f: "梁", open: 1 },
  { c: "梁(L)", i: "beam" }, { c: "圈梁(E)", i: "ring", last: 1 },
  { f: "板" },
  { f: "基础", open: 1 },
  { c: "基础梁(F)", i: "fbeam" }, { c: "筏板基础(M)", i: "raft", sel: 1 }, { c: "集水坑(K)", i: "sump" },
  { c: "柱墩(Y)", i: "pier" }, { c: "筏板主筋(R)", i: "main" }, { c: "筏板负筋(X)", i: "neg" },
  { c: "独立基础(P)", i: "iso" }, { c: "条形基础(T)", i: "strip" }, { c: "桩承台(V)", i: "cap" },
  { c: "承台梁(F)", i: "fbeam" }, { c: "桩(U)", i: "pile" }, { c: "基础板带(W)", i: "band", last: 1 },
  { f: "其它" },
  { f: "自定义", open: 1 },
  { c: "点(X)", i: "grid" },
];

/* ---------- work area ---------- */
const Work = styled.div`
  flex: 1;
  min-width: 0;
  display: flex;
  flex-direction: column;
`;

const ScenePane = styled.div`
  flex: none;
  height: 305px;
  margin-top: 2px;
  background: #000;
`;

const SpinBox = styled.div`
  flex: none;
  box-sizing: border-box;
  width: ${(p) => p.$w}px;
  height: 23px;
  margin-left: ${(p) => p.$ml || 0}px;
  border: 1px solid #6e6e6e;
  border-width: 2px 1px 1px 2px;
  display: flex;
  align-items: center;
  justify-content: flex-end;
  color: #777;
  font-size: 13px;
  font-family: "Liberation Sans", sans-serif;
  background: #f4f4f4;
`;

const SpinArrows = styled.span`
  flex: none;
  width: 14px;
  margin-left: 7px;
  display: flex;
  flex-direction: column;
  align-items: center;
  gap: 6px;
`;

const UpTri = styled.span`
  display: block;
  width: 0;
  height: 0;
  border-left: 3px solid transparent;
  border-right: 3px solid transparent;
  border-bottom: 3px solid #444;
`;

const DownTri = styled(UpTri)`
  border-bottom: none;
  border-top: 3px solid #444;
`;

const GrayText = styled.span`
  flex: none;
  width: ${(p) => p.$w}px;
  margin-left: ${(p) => p.$ml || 0}px;
  color: #6e6e6e;
  font-family: "Liberation Sans", sans-serif;
  font-size: 13px;
  white-space: nowrap;
`;

const CheckBox = styled.span`
  flex: none;
  box-sizing: border-box;
  width: 11px;
  height: 11px;
  border: 1px solid #6e6e6e;
  background: #fff;
  margin: 0 9px 0 3px;
`;

const PlainText = styled.span`
  flex: none;
  margin-left: ${(p) => p.$ml || 0}px;
  margin-right: ${(p) => p.$mr || 0}px;
  white-space: nowrap;
  color: ${(p) => (p.$off ? "#a6a6a6" : "#1a1a1a")};
`;

const RebarPane = styled.div`
  flex: none;
  margin-top: 6px;
  height: 198px;
  display: flex;
`;

const Splitter = styled.div`
  flex: none;
  width: 13px;
  position: relative;
  background-image: radial-gradient(#c4c4c4 1px, transparent 1.2px);
  background-size: 4px 4px;
  background-position: 1px 14px;
  background-repeat: repeat;
`;

const PaneClose = styled.div`
  position: absolute;
  left: 0;
  top: 0;
  width: 11px;
  height: 11px;
  background: #f0f0f0;
  border: 1px solid #888;
  box-sizing: border-box;
`;

const RebarBody = styled.div`
  flex: 1;
  min-width: 0;
  display: flex;
  flex-direction: column;
`;

const RebarBar = styled.div`
  flex: none;
  height: 26px;
  box-sizing: border-box;
  display: flex;
  align-items: center;
  padding-bottom: 4px;
  background: linear-gradient(#fbfbfb, #efefef);
`;

const NavGlyph = styled.span`
  flex: none;
  width: ${(p) => p.$w}px;
  display: flex;
  justify-content: center;
`;

const TableBox = styled.div`
  flex: 1;
  min-height: 0;
  background: #fff;
  border: 1px solid #a8a8a8;
  border-right: none;
  display: flex;
  flex-direction: column;
  overflow: hidden;
`;

const Grid = styled.div`
  display: grid;
  grid-template-columns: 33px 73px 56px 36px 33px 202px 166px 155px 61px 38px 40px 48px 61px 61px 71px 80px;
  grid-auto-rows: 19px;
  flex: none;
  width: 1200px;
`;

const HeadCell = styled.div`
  box-sizing: border-box;
  border-right: 1px solid #c0c0c0;
  border-bottom: 1px solid #c0c0c0;
  background: ${(p) => (p.$sel ? "linear-gradient(#fcdca6,#f6c473)" : "linear-gradient(#ffffff,#e9e9e9)")};
  color: ${(p) => (p.$sel ? "#4d0d5c" : "#1a1a1a")};
  display: flex;
  align-items: center;
  justify-content: center;
  white-space: nowrap;
  height: 20px;
  overflow: hidden;
`;

const HeadUnit = styled.span`
  font-family: "Liberation Mono", monospace;
  font-size: 9px;
`;

const BodyCell = styled.div`
  box-sizing: border-box;
  border-right: 1px solid #c0c0c0;
  border-bottom: 1px solid #c0c0c0;
  background: ${(p) => (p.$num ? "#fdd9a0" : p.$sel ? "#d6e8f7" : "#fff")};
  color: #4d0d5c;
  font-family: "Liberation Mono", monospace;
  display: flex;
  align-items: center;
  justify-content: center;
  margin-top: 1px;
  ${(p) => p.$sel && "border-left:2px solid #111;"}
`;

const HScroll = styled.div`
  margin-top: auto;
  height: 15px;
  flex: none;
  display: flex;
  align-items: center;
  background: #f0f0f0;
  margin-bottom: 2px;
`;

const HThumb = styled.div`
  flex: none;
  width: 824px;
  height: 15px;
  background: #c8c8c8;
`;

const ArrowCell = styled.div`
  flex: none;
  width: 17px;
  display: flex;
  justify-content: center;
`;

const columns = [
  "", "筋号", ["直径", "(mm)"], "级别", "图号", "图形", "计算公式", "公式描述",
  ["长度", "(mm)"], "根数", "搭接", ["损耗", "(%)"], ["单重", "(kg)"], ["总重", "(kg)"], "钢筋归类", "搭接形式",
];

/* ---------- status + taskbar ---------- */
const StatusBar = styled.div`
  flex: none;
  height: 20px;
  display: flex;
  gap: 2px;
`;

const StatusCell = styled.div`
  flex: ${(p) => (p.$w ? "none" : 1)};
  width: ${(p) => p.$w}px;
  box-sizing: border-box;
  height: 19px;
  padding-left: 2px;
  display: flex;
  align-items: center;
  white-space: nowrap;
  border: 1px solid #dcdcdc;
  background: linear-gradient(#fafafa, #f0f0f0);
`;

const Mono = styled.span`
  font-family: "Liberation Mono", monospace;
  font-size: 10px;
`;

const Taskbar = styled.div`
  flex: none;
  height: 40px;
  display: flex;
  align-items: stretch;
  background: #08191f;
  color: #e8e8e8;
`;

const StartBtn = styled.div`
  flex: none;
  width: 48px;
  background: #000;
  display: flex;
  align-items: center;
  justify-content: center;
`;

const SearchBox = styled.div`
  flex: none;
  width: 344px;
  box-sizing: border-box;
  background: #f2f2f2;
  color: #333;
  display: flex;
  align-items: center;
  padding: 0 12px 0 10px;
  font-size: 14px;
  gap: 8px;
`;

const Slot = styled.div`
  flex: none;
  position: relative;
  width: ${(p) => p.$w}px;
  font-size: ${(p) => p.$fs || 12}px;
  display: flex;
  flex-direction: column;
  align-items: center;
  justify-content: center;
  text-align: center;
  line-height: ${(p) => p.$lh || 16}px;
  ${(p) =>
    p.$run &&
    `&::after{content:"";position:absolute;bottom:0;left:50%;margin-left:-16px;width:32px;height:2px;background:#76b9ed;}`}
`;

const tb = (d) => (
  <svg width="24" height="24" viewBox="0 0 24 24" style={{ display: "block" }}>
    {d}
  </svg>
);

const Scene = () => (
  <svg width="1196" height="305" viewBox="170 168 1196 305" style={{ display: "block" }} shapeRendering="crispEdges">
    <g fill="none" stroke="#007a00">
      <path d="M170 202L1255 220" />
      <path d="M1240 226L1288 214M1289 260L1302 258" />
      <path d="M195 168L211 218M207.500 168L225 219M430 168L448 223M555 168L573 225M727 168L747 228M840 168L859 230M1252 168L1277 261" />
      <circle cx="435" cy="181" r="12.500" shapeRendering="auto" />
      <circle cx="842" cy="181" r="12.500" shapeRendering="auto" />
      <circle cx="1251" cy="181" r="12.500" shapeRendering="auto" />
      <circle cx="183" cy="359" r="12.500" shapeRendering="auto" />
    </g>
    <g fill="#e8e8e8" fontFamily="'Liberation Sans', sans-serif" textAnchor="middle" shapeRendering="auto">
      <text x="435" y="186" fontSize="13">6</text>
      <text x="842" y="186" fontSize="13">7</text>
      <text x="1251" y="186" fontSize="13">8</text>
      <text x="183" y="364" fontSize="13" fill="#ddd">B</text>
      <text x="1069" y="250" fontSize="14.500" fill="#eee">3300</text>
    </g>
    <g fill="none" stroke="#f00">
      <path d="M170 435L1340 455M170 444L1343 463M170 470L330 473" />
      <path d="M257 359L294 473M270 360L307 473M493 363L510 412M618.500 365L653 473M793 367L826 473M904 369L937 473M1314.500 376L1346 473" />
    </g>
    <polygon points="893,255 1295,261 1316,328 906,321 906,297" fill="#ababab" />
    <polygon points="906,321 1316,328 1316,360 1314,376 904,369" fill="#878787" />
    <polygon points="170,218 889,230 906,297 170,285" fill="#0073e6" />
    <polygon points="170,285 906,297 904,369 170,357" fill="#005ab4" />
    <path d="M170 358L1314 376" stroke="#f00" fill="none" />
    <polygon points="372,461 465,462 465,473 376,473" fill="#737300" />
    <polygon points="606,465 608,465 611,473 606,473" fill="#737300" />
    <polygon points="463,420 528,420 533,437 564,437 564,431 606,431 606,473 463,473" fill="#5a00b4" />
    <polygon points="528,423 532,437 533,473 528,473" fill="#48009a" />
    <polygon points="465,412 538,413 602,414 607,431 564,431 564,437 532,437 528,420 465,420" fill="#7000e0" />
    <polygon points="224,385 226,375 229,385 228,423 225,423" fill="#0a7cf0" />
    <polygon points="226,421 262,422 263,419 274,423 263,427 262,425 226,425" fill="#f00" />
    <rect x="221" y="419" width="4" height="5" fill="#20e020" />
    <path d="M213 370h9l-9 13h9" stroke="#1a7cf0" fill="none" />
    <path d="M231 410l4 5 4-5M235 415v5" stroke="#30e030" fill="none" />
    <path d="M261 416l9 8M270 416l-9 8" stroke="#f00" fill="none" />
  </svg>
);

const App = () => (
  <Page>
    <GlobalStyle />
    <TitleBar>
      <AppLogo>
        <svg width="15" height="15" viewBox="0 0 15 15" style={{ display: "block" }}>
          <path d="M7.500 2v11M4 5.500v3h7v-3" fill="none" stroke="#fff" strokeWidth="1.6" />
        </svg>
      </AppLogo>
      <TitleText>
        广联达BIM钢筋算量软件 GGJ2013 - [C:\Users\Administrator.PC-20141127NRHM\Desktop\白龙村-2016-08-25-13-27-07(2160版).GGJ12]
      </TitleText>
      <Spacer />
      <WindowBtn>
        <svg width="12" height="12" viewBox="0 0 12 12"><path d="M1 6.500h10" stroke="#888" /></svg>
      </WindowBtn>
      <WindowBtn>
        <svg width="12" height="12" viewBox="0 0 12 12"><path d="M3 3V1h7v8H8M1.500 3.500h7v8h-7z" fill="none" stroke="#888" /></svg>
      </WindowBtn>
      <WindowBtn>
        <svg width="12" height="12" viewBox="0 0 12 12"><path d="M1 1l10 10M11 1L1 11" stroke="#888" /></svg>
      </WindowBtn>
    </TitleBar>
    <Badge>71</Badge>

    <MenuBar>
      {[
        ["文件(F)", 48], ["编辑(E)", 49], ["楼层(L)", 48], ["构件(N)", 52], ["绘图(D)", 51], ["修改(M)", 54],
        ["钢筋量(Q)", 64], ["视图(V)", 50], ["工具(T)", 50], ["云应用(Y)", 60], ["BIM应用(I)", 70], ["在线服务(S)", 73],
        ["帮助(H)", 51], ["版本号(B)", 60],
      ].map(([t, w]) => (
        <MenuItem key={t} $w={w}>{t}</MenuItem>
      ))}
      <MenuItem $w={87} $gap={4}>
        <Icon n="change" />新建变更<Caret $ml={5} />
      </MenuItem>
      <MenuItem $w={63} $gap={5}>
        <svg width="15" height="15" viewBox="0 0 15 15" style={{ flex: "none" }}>
          <path d="M1 8c0-5 3-7 6.500-7S14 3 14 8s-3 6-6.500 6S1 13 1 8z" fill="#1e9be8" />
          <circle cx="5" cy="6" r="1.300" fill="#fff" /><circle cx="10" cy="6" r="1.300" fill="#fff" />
          <path d="M4 9c2 2 5 2 7 0" fill="none" stroke="#fff" />
        </svg>
        广小二
      </MenuItem>
      <AskBox>如何在软件中定义四级..</AskBox>
      <MenuItem $w={118} $gap={4}>
        <svg width="16" height="18" viewBox="0 0 16 18" style={{ flex: "none" }}>
          <rect width="16" height="18" rx="3" fill="#4f97cf" />
          <circle cx="8" cy="7" r="3" fill="#fff" /><path d="M3 14c1-3 9-3 10 0z" fill="#fff" />
        </svg>
        <Phone>13907298339</Phone><Caret $ml={6} />
      </MenuItem>
      <MenuItem $w={60}>造价豆:0</MenuItem>
      <svg width="16" height="18" viewBox="0 0 16 18" style={{ flex: "none" }}>
        <path d="M8 1c3 0 4 3 4 6 0 3 1 5 3 6H1c2-1 3-3 3-6 0-3 1-6 4-6z" fill="#2b7fe0" />
        <path d="M6 14h4l-2 3z" fill="#2b7fe0" />
      </svg>
      <Spacer />
      <Overflow $top={4}>»&nbsp;</Overflow>
    </MenuBar>

    <ToolRow>
      <Group $w={152} $pl={4}>
        <ToolBox $w={22}><Icon n="newdoc" /></ToolBox>
        <ToolBox $w={35} $gap={0}><Icon n="open" /><Caret $ml={6} /></ToolBox>
        <ToolBox $w={21}><Icon n="save" /></ToolBox>
        <Sep $w={8} />
        <ToolBox $w={29} $gap={0}><Icon n="undo" /><Caret $ml={5} /></ToolBox>
        <Spacer />
        <Overflow>»&nbsp;&nbsp;&nbsp;</Overflow>
      </Group>
      <Group $w={548} $pl={5}>
        {renderItems(row1a)}
        <Spacer />
        <Overflow>&nbsp;</Overflow>
      </Group>
      <Group $w={663} $ml={3} $pl={3}>
        <ToolBox $w={50} $lit={1}><Icon n="cube" />三维</ToolBox>
        <ComboArrow><Caret $ml={0} /></ComboArrow>
        {renderItems(row1b)}
        <Spacer />
        <Overflow>»&nbsp;</Overflow>
      </Group>
    </ToolRow>

    <Main>
      <Nav>
        <NavHead>
          模块导航栏
          <Spacer />
          <Icon n="pin" s={10} />
          <svg width="20" height="10" viewBox="0 0 20 10"><path d="M6 1l8 8M14 1l-8 8" stroke="#222" /></svg>
        </NavHead>
        <NavBtn $mt={2}>工程设置</NavBtn>
        <NavBtn>绘图输入</NavBtn>
        <NavTools>
          <Icon n="plusplus" />
          <Icon n="minusminus" />
        </NavTools>
        <TreeFrame>
          <TreeList>
            {tree.map((r, idx) =>
              r.f ? (
                <TreeRow key={idx}>
                  <Chev open={r.open} />
                  <Stub />
                  <Icon n={r.open ? "fopen" : "fclosed"} />
                  <TreeLabel $ml={5}>{r.f}</TreeLabel>
                </TreeRow>
              ) : (
                <TreeRow key={idx}>
                  <Guide last={r.last} trunk />
                  <SelectedCell $sel={r.sel}>
                    <Icon n={r.i} />
                    <span><Label text={r.c} /></span>
                  </SelectedCell>
                </TreeRow>
              ),
            )}
          </TreeList>
          <VScroll>
            <ScrollEnd $h={16}>
              <svg width="9" height="6" viewBox="0 0 9 6"><path d="M1 5l3.500-3.500L8 5" fill="none" stroke="#555" strokeWidth="1.5" /></svg>
            </ScrollEnd>
            <ScrollThumb $h={390} />
            <Spacer />
            <ScrollEnd $h={16}>
              <svg width="9" height="6" viewBox="0 0 9 6"><path d="M1 1l3.500 3.500L8 1" fill="none" stroke="#555" strokeWidth="1.5" /></svg>
            </ScrollEnd>
          </VScroll>
        </TreeFrame>
        <NavBtn>单构件输入</NavBtn>
        <NavBtn>报表预览</NavBtn>
      </Nav>

      <Work>
        <ToolRow $h={24}>
          <Group $w={789} $ml={2}><Grip $mr={5} />{renderItems(row2)}</Group>
        </ToolRow>
        <ToolRow $mt={2}>
          <Group $w={565} $ml={2}><Grip $mr={3} />{renderItems(row3a)}</Group>
          <Group $w={421} $ml={74}><Grip $mr={6} />{renderItems(row3b)}</Group>
        </ToolRow>
        <ToolRow $mt={2}>
          <Group $w={1162} $ml={2}>
            <Grip $mr={2} />
            <ToolBox $w={51} $on={1} $gap={3}><Icon n="cursor" />选择</ToolBox>
            <NavGlyph $w={12}><Caret $ml={0} /></NavGlyph>
            <Sep $w={9} />
            {renderItems(row4)}
            <Spacer />
            <Overflow>»&nbsp;&nbsp;</Overflow>
          </Group>
          <Group $w={32}><Grip /></Group>
        </ToolRow>

        <ScenePane><Scene /></ScenePane>

        <ToolRow $mt={1}>
          <Group $w={208} $ml={2}><Grip $mr={4} />{renderItems(snapA)}</Group>
          <Group $w={263} $ml={2}><Grip $mr={5} />{renderItems(snapB)}</Group>
          <Group $w={407} $ml={5} $pl={4}>
            <Combo $w={58} $mr={0}>不偏移<ComboArrow><Caret $ml={0} /></ComboArrow></Combo>
            <Sep $w={8} />
            <GrayText $w={19}>X=</GrayText>
            <SpinBox $w={58}>0<SpinArrows><UpTri /><DownTri /></SpinArrows></SpinBox>
            <GrayText $w={28} $ml={1}>mm</GrayText>
            <GrayText $w={17}>Y=</GrayText>
            <SpinBox $w={58}>0<SpinArrows><UpTri /><DownTri /></SpinArrows></SpinBox>
            <GrayText $w={23} $ml={2}>mm</GrayText>
            <Sep $w={4} />
            <CheckBox />
            <PlainText $mr={2}>旋转</PlainText>
            <SpinBox $w={68}>0.000<SpinArrows><UpTri /><DownTri /></SpinArrows></SpinBox>
            <GrayText $w={6} $ml={4}>°</GrayText>
          </Group>
        </ToolRow>

        <RebarPane>
          <Splitter><PaneClose>
            <svg width="9" height="9" viewBox="0 0 9 9" style={{ display: "block" }}><path d="M1 1l7 7M8 1L1 8" stroke="#b03030" /></svg>
          </PaneClose></Splitter>
          <RebarBody>
            <RebarBar>
              <NavGlyph $w={22}><Icon n="first" s={14} /></NavGlyph>
              <NavGlyph $w={24}><Icon n="prev" s={14} /></NavGlyph>
              <NavGlyph $w={23}><Icon n="next" s={14} /></NavGlyph>
              <NavGlyph $w={24}><Icon n="last" s={14} /></NavGlyph>
              <Sep $w={10} />
              <NavGlyph $w={21}><Icon n="up" s={14} /></NavGlyph>
              <NavGlyph $w={23}><Icon n="down" s={14} /></NavGlyph>
              <Sep $w={7} />
              <ToolBox $w={51} $off={1}><Icon n="ins" />插入</ToolBox>
              <ToolBox $w={51} $off={1}><Icon n="del" />删除</ToolBox>
              <ToolBox $w={75} $off={1}><Icon n="scale" />缩尺配筋</ToolBox>
              <ToolBox $w={75} $off={1}><Icon n="info" />钢筋信息</ToolBox>
              <ToolBox $w={75}><Icon n="lib" />钢筋图库</ToolBox>
              <ToolBox $w={61}><Icon n="other" />其他<Caret $ml={3} /></ToolBox>
              <PlainText $ml={1}>关闭</PlainText>
              <Sep $w={15} />
              <PlainText $ml={-1}>单构件钢筋总重(kg)：0</PlainText>
            </RebarBar>
            <TableBox>
              <Grid>
                {columns.map((c, i) => (
                  <HeadCell key={i} $sel={i === 2}>
                    {Array.isArray(c) ? <>{c[0]}<HeadUnit>{c[1]}</HeadUnit></> : c}
                  </HeadCell>
                ))}
                {columns.map((c, i) => (
                  <BodyCell key={i} $num={i === 0} $sel={i === 2}>{i === 0 ? "1*" : ""}</BodyCell>
                ))}
              </Grid>
              <HScroll>
                <ArrowCell>
                  <svg width="6" height="9" viewBox="0 0 6 9"><path d="M5 1L1.500 4.500 5 8" fill="none" stroke="#555" strokeWidth="1.5" /></svg>
                </ArrowCell>
                <HThumb />
                <Spacer />
                <ArrowCell>
                  <svg width="6" height="9" viewBox="0 0 6 9"><path d="M1 1l3.500 3.500L1 8" fill="none" stroke="#555" strokeWidth="1.5" /></svg>
                </ArrowCell>
              </HScroll>
            </TableBox>
          </RebarBody>
        </RebarPane>
      </Work>
    </Main>

    <StatusBar>
      <StatusCell $w={148}><Mono>X=416150 Y=24801</Mono></StatusCell>
      <StatusCell $w={78}>层高:<Mono>2.15m</Mono></StatusCell>
      <StatusCell $w={98}>底标高:<Mono>-2.2m</Mono></StatusCell>
      <StatusCell $w={48}><Mono>1(20)</Mono></StatusCell>
      <StatusCell>按鼠标左键指定第一个角点，或拾取构件图元</StatusCell>
      <StatusCell $w={70}><Mono>295.5 FPS</Mono></StatusCell>
    </StatusBar>

    <Taskbar>
      <StartBtn>
        <svg width="16" height="16" viewBox="0 0 16 16"><path d="M0 2.200l6.500-.9v6.200H0zM7.500 1.200L16 0v7.500H7.500zM0 8.500h6.500v6.200L0 13.800zM7.500 8.500H16V16l-8.500-1.200z" fill="#fff" /></svg>
      </StartBtn>
      <SearchBox>
        <svg width="22" height="22" viewBox="0 0 22 22" style={{ flex: "none" }}><circle cx="11" cy="11" r="9" fill="none" stroke="#111" strokeWidth="2.500" /></svg>
        <span>在这里输入你要搜索的内容</span>
        <Spacer />
        <svg width="12" height="20" viewBox="0 0 12 20" style={{ flex: "none" }}><path d="M3.500 1h5v10h-5zM1 9c0 6 10 6 10 0M6 14v4M3 18.500h6" fill="none" stroke="#444" /></svg>
      </SearchBox>
      <Slot $w={48}>{tb(<path d="M5 5h14M5 19h14M6 9h11v6H6zM21 7v2M21 11v2M21 15v2" fill="none" stroke="#fff" strokeWidth="1.4" />)}</Slot>
      <Slot $w={50}>{tb(<path d="M12 12C6 12 4 8 5 4c2-2 6-2 7 1 2-3 6-3 7-1 1 4-1 8-7 8zm0 0c-6 0-8 4-7 8 2 2 6 2 7-1 2 3 6 3 7 1 1-4-1-8-7-8z" fill="#e4e4e4" />)}</Slot>
      <Slot $w={52}>{tb(<><path d="M5 14a7 7 0 1 1 14-2H8M18 17a7 7 0 0 1-12 0" fill="none" stroke="#fff" strokeWidth="2.200" /><path d="M4 21c-2-3 8-14 16-18" fill="none" stroke="#ccc" /></>)}</Slot>
      <Slot $w={58}>{tb(<><circle cx="10" cy="14" r="7" fill="none" stroke="#bbb" strokeWidth="1.500" /><path d="M14 14h-4M10 10a4 4 0 1 0 4 4" fill="none" stroke="#bbb" /><path d="M17 1c2 0 3 2 3 4s1 3 2 4H12c1-1 2-2 2-4s1-4 3-4z" fill="#f0b428" /></>)}</Slot>
      <Slot $w={30}>{tb(<path d="M3 12C4 5 9 2 13 2c6 0 9 5 9 11H9c0 4 6 6 12 3v5c-8 3-16 0-16-7 0-3 2-6 6-7-3 1-6 3-8 5z" fill="#0f7ad6" />)}</Slot>
      <Slot $w={54}>{tb(<><path d="M5 13a7 7 0 1 1 14-1H9M18 17a7 7 0 0 1-11 0" fill="none" stroke="#2c9be8" strokeWidth="3" /><path d="M3 21c-3-3 9-16 18-18" fill="none" stroke="#f2c230" strokeWidth="1.500" /></>)}</Slot>
      <Slot $w={28}>{tb(<><path d="M1 4h9l2 2h11v15H1z" fill="#f6d36a" /><path d="M1 9h22v12H1z" fill="#fbe49a" /><path d="M8 14h8v7H8z" fill="#2d9be0" /></>)}</Slot>
      <Slot $w={54} $run={1}>{tb(<><circle cx="12" cy="12" r="11" fill="#7ecb3a" /><circle cx="12" cy="12" r="11" fill="none" stroke="#d6ecc0" /><path d="M6 12h12M17 9a6 6 0 1 0 0 7" fill="none" stroke="#fff" strokeWidth="2" /></>)}</Slot>
      <Slot $w={28}>{tb(<><path d="M0 9l12-8 12 8v14H0z" fill="#fff" /><path d="M0 9l12 8 12-8" fill="none" stroke="#08191f" strokeWidth="1.500" /></>)}</Slot>
      <Slot $w={54} $run={1}>{tb(<path d="M20 2c-7-1-16 2-16 11 0 6 5 9 9 9 5 0 8-4 8-7 0-4-3-6-6-6-2 0-4 1-4 3 2-1 5 0 5 3 0 2-2 3-4 2-3-1-3-6 0-9 2-2 5-4 8-6z" fill="#1f96e8" />)}</Slot>
      <Slot $w={32} $run={1}>{tb(<><rect width="24" height="24" rx="4" fill="#0f96ee" /><path d="M12 4v16M12 8c-1 0-2-2 0-3 2 1 1 3 0 3M5 10v3c0 3 4 3 6 1M19 10v3c0 3-4 3-6 1" fill="none" stroke="#fff" strokeWidth="1.800" /></>)}</Slot>
      <Slot $w={58}>链接</Slot>
      <Slot $w={36}>{tb(<><circle cx="15" cy="6" r="3.500" fill="none" stroke="#eee" /><circle cx="8" cy="11" r="3" fill="none" stroke="#eee" /><path d="M3 21c0-4 2-6 5-6s5 2 5 6M13 11c3 0 6 2 6 6" fill="none" stroke="#eee" /></>)}</Slot>
      <Slot $w={84} $lh={18}><span>34%</span><span>CPU使用</span></Slot>
      <Slot $w={14}><svg width="12" height="8" viewBox="0 0 12 8"><path d="M1 7l5-5 5 5" fill="none" stroke="#fff" strokeWidth="1.300" /></svg></Slot>
      <Slot $w={36}>{tb(<path d="M5 4v4M10 4v4M3 8h9v3H3zM7 11v3h-1M8 8h11v8H5v-3M19 11h2" fill="none" stroke="#fff" strokeWidth="1.300" />)}</Slot>
      <Slot $w={16}><svg width="16" height="16" viewBox="0 0 16 16"><path d="M1 15c0-8 6-14 14-14M4 15c0-6 5-11 11-11M7 15c0-4 4-8 8-8M10 15c0-2 3-5 5-5" fill="none" stroke="#ddd" strokeDasharray="2 1" /></svg></Slot>
      <Slot $w={26}><svg width="18" height="16" viewBox="0 0 18 16"><path d="M1 5h3l5-4v14l-5-4H1z" fill="none" stroke="#fff" /><path d="M12 6l4 4M16 6l-4 4" stroke="#fff" /></svg></Slot>
      <Slot $w={32}><svg width="24" height="17" viewBox="0 0 24 17"><path d="M.5.5h23v16H.5zM3 4h18M3 7h18M3 10h18M6 13h12" fill="none" stroke="#fff" strokeDasharray="2 .6" /></svg></Slot>
      <Slot $w={24}>中</Slot>
      <Slot $w={32}><svg width="18" height="20" viewBox="0 0 18 20"><path d="M2 2l14-2 2 16-14 4-3-2z" fill="#f04e23" /><path d="M13 6H7v4h5v4H5" fill="none" stroke="#fff" strokeWidth="2" /></svg></Slot>
      <Slot $w={76} $lh={19} $fs={13}><span>10:13</span><span>2018/9/24</span></Slot>
      <Slot $w={38}><svg width="18" height="20" viewBox="0 0 18 20"><path d="M1 1h16v14h-5l-3 3-3-3H1z" fill="none" stroke="#fff" strokeWidth="1.200" /></svg></Slot>
    </Taskbar>
  </Page>
);

export default App;
